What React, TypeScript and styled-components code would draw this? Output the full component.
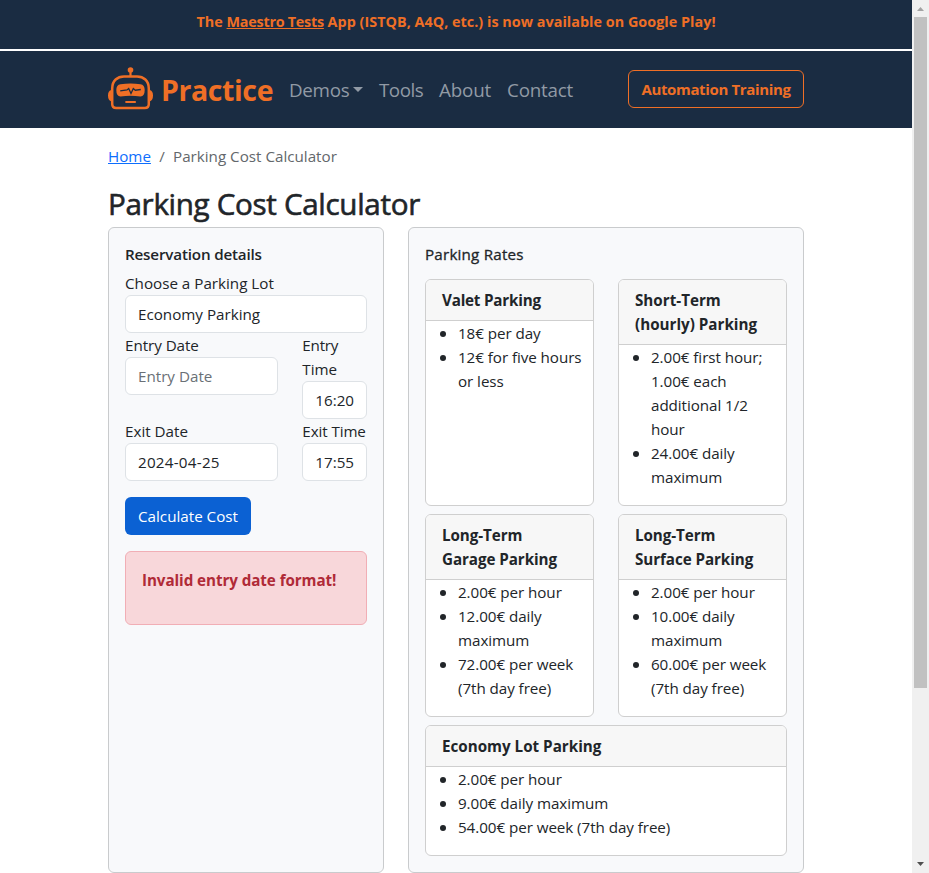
import React from "react";
import styled, { createGlobalStyle } from "styled-components";

const Global = createGlobalStyle`
  *, *::before, *::after { box-sizing: border-box; }
  html, body { margin: 0; height: 873px; overflow: hidden; background: #fff; }
  body, input, button {
    font-family: "Open Sans", "Noto Sans", sans-serif;
    font-size: 15.2px;
    line-height: 24px;
    color: #212529;
  }
`;

const NAVY = "#1a2c42";
const ORANGE = "#ef6f26";

/* Label whose tracking is tuned per use */
const Text = styled.span<{ $ls?: number }>`
  letter-spacing: ${(p) => p.$ls ?? 0}px;
  white-space: nowrap;
`;

const Window = styled.div`
  display: grid;
  grid-template-columns: 912px 17px;
  height: 873px;
`;
const Page = styled.div`
  display: flex;
  flex-direction: column;
  min-width: 0;
`;
const Container = styled.div`
  width: 696px;
  margin: 0 auto;
`;

const Banner = styled.div`
  height: 51px;
  padding-top: 10px;
  background: ${NAVY};
  border-bottom: 2px solid #fff;
  color: ${ORANGE};
  font-size: 14.36px;
  font-weight: 700;
  text-align: center;
`;
const BannerLink = styled.a`
  letter-spacing: -0.25px;
  text-decoration: underline;
`;

const Navbar = styled.nav`
  height: 77px;
  background: ${NAVY};
`;
const NavRow = styled(Container)`
  display: flex;
  align-items: center;
  height: 76px;
`;
const Brand = styled.div`
  display: flex;
  align-items: center;
  width: 181px;
  color: ${ORANGE};
  font-size: 28.5px;
  font-weight: 700;
  line-height: 40px;
  svg { flex: none; margin: -2px 8px 0 0; }
  span { padding-top: 2px; }
`;
const NavLink = styled.div<{ $w: number }>`
  display: flex;
  align-items: center;
  width: ${(p) => p.$w}px;
  padding-top: 1px;
  color: #919aa5;
  font-size: 18.8px;
  line-height: 30px;
`;
const Caret = styled.span`
  margin: -1px 0 0 4px;
  border: 5px solid transparent;
  border-top-color: currentColor;
  border-bottom: 0;
`;
const TrainingButton = styled.button`
  width: 176px;
  height: 38px;
  margin-left: auto;
  padding: 0;
  border: 1px solid ${ORANGE};
  border-radius: 6px;
  background: transparent;
  color: ${ORANGE};
  font-size: 15px;
  font-weight: 700;
`;

const Breadcrumb = styled.div`
  display: flex;
  margin-top: 16px;
  color: #63676b;
`;
const CrumbLink = styled.a`
  width: 43px;
  color: #0d6efd;
  text-decoration: underline;
`;
const CrumbSlash = styled.span`
  width: 22px;
  text-align: center;
`;
const Heading = styled.h1`
  margin: 16px 0 5px;
  padding-top: 1px;
  font-size: 29.6px;
  font-weight: 400;
  line-height: 37px;
  -webkit-text-stroke: 0.6px currentColor;
`;

const Columns = styled.div`
  display: grid;
  grid-template-columns: 276px 396px;
  gap: 24px;
  height: 646px;
`;
const Panel = styled.section`
  padding: 16px;
  border: 1px solid #c9cbcd;
  border-radius: 6px;
  background: #f8f9fb;
`;
const PanelTitle = styled.h2<{ $gap: number; $medium?: boolean }>`
  margin: 1px 0 ${(p) => p.$gap - 1}px;
  font-size: 15.2px;
  font-weight: ${(p) => (p.$medium ? 400 : 600)};
  line-height: 19px;
  -webkit-text-stroke: ${(p) => (p.$medium ? 0.3 : 0)}px currentColor;
`;

const Field = styled.label`
  display: block;
`;
const FieldRow = styled.div`
  display: grid;
  grid-template-columns: 153.3px 1fr;
  column-gap: 24px;
`;
const Input = styled.input`
  display: block;
  width: 100%;
  height: 38px;
  padding: 6px 12px;
  border: 1px solid #dee2e6;
  border-radius: 6px;
  outline: none;
  background: #fff;
  &::placeholder { color: #6a7076; opacity: 1; }
`;
const DateInput = styled(Input)`
  letter-spacing: 0.25px;
`;
const Submit = styled.button`
  display: block;
  width: 126px;
  height: 38px;
  margin: 16px 0;
  padding: 0;
  border: 0;
  border-radius: 6px;
  background: #0b61d3;
  color: #fff;
`;
const Alert = styled.div`
  height: 74px;
  padding: 16px;
  border: 1px solid #f1aeb5;
  border-radius: 6px;
  background: #f8d7da;
  color: #b02a37;
  font-weight: 700;
`;

const Rates = styled.div`
  display: grid;
  grid-template-columns: 169px 169px;
  gap: 8px 24px;
`;
const RateCard = styled.article<{ $wide?: boolean }>`
  grid-column: ${(p) => (p.$wide ? "1 / -1" : "auto")};
  overflow: hidden;
  border: 1px solid #cfcfcf;
  border-radius: 6px;
  background: #fff;
`;
const RateHeader = styled.header`
  display: flex;
  flex-direction: column;
  padding: 8px 16px;
  border-bottom: 1px solid #cfcfcf;
  background: #f7f7f7;
  font-weight: 700;
`;
const RateList = styled.ul`
  margin: 0 0 16px;
  padding: 0;
  list-style: none;
`;
const RateItem = styled.li`
  display: grid;
  grid-template-columns: 18px 1fr;
  padding-left: 14px;
  &::before {
    content: "";
    width: 6px;
    height: 6px;
    margin-top: 10px;
    border-radius: 50%;
    background: currentColor;
  }
`;
const Line = styled(Text)`
  display: block;
`;

const ScrollTrack = styled.aside`
  display: flex;
  flex-direction: column;
  align-items: center;
  background: #f0f0f0;
`;
const ScrollArrow = styled.div`
  height: 17px;
  svg { display: block; }
`;
const ScrollThumb = styled.div`
  width: 13px;
  height: 671px;
  margin-bottom: auto;
  background: #c1c1c1;
`;

const rates: { title: string[]; items: string[][]; ls?: number; wide?: boolean }[] = [
  { title: ["Valet Parking"], items: [["18€ per day"], ["12€ for five hours", "or less"]], ls: -0.2 },
  {
    title: ["Short-Term", "(hourly) Parking"],
    items: [
      ["2.00€ first hour;", "1.00€ each", "additional 1/2", "hour"],
      ["24.00€ daily", "maximum"],
    ],
  },
  {
    title: ["Long-Term", "Garage Parking"],
    items: [["2.00€ per hour"], ["12.00€ daily", "maximum"], ["72.00€ per week", "(7th day free)"]],
    ls: -0.07,
  },
  {
    title: ["Long-Term", "Surface Parking"],
    items: [["2.00€ per hour"], ["10.00€ daily", "maximum"], ["60.00€ per week", "(7th day free)"]],
    ls: -0.07,
  },
  {
    title: ["Economy Lot Parking"],
    items: [["2.00€ per hour"], ["9.00€ daily maximum"], ["54.00€ per week (7th day free)"]],
    wide: true,
  },
];

const Robot = () => (
  <svg width="45" height="43" viewBox="0 0 45 43" fill="none" stroke={ORANGE}>
    <circle cx="22.5" cy="3" r="2.8" fill={ORANGE} stroke="none" />
    <path d="M22.5 4v5" strokeWidth="2.200" />
    <path d="M4.200 37V21.500C4.200 13.500 9.500 9.500 16 9.500h13c6.500 0 11.800 4 11.800 12V37q0 4-4 4H8.200q-4 0-4-4Z" strokeWidth="2.500" />
    <path d="M3.500 23Q0 23.500 0 28.500t3.500 6ZM41.500 23q3.500.5 3.500 5.500t-3.500 6Z" fill={ORANGE} stroke="none" />
    <path d="M12.500 17.200q10-1.600 20 0 4.200.6 4.200 5.800 0 6.200-4.200 6.400-10-1.300-20 0-4.200-.2-4.200-6.400 0-5.200 4.200-5.800Z" fill={ORANGE} stroke="none" />
    <path d="M12.200 23.800l6.800-.9 1.700-1.400 2.300 5 2.300-5 2 1.700 5.500-.7" stroke={NAVY} strokeWidth="1.300" />
    <path d="M18.200 35h8.800" strokeWidth="2.200" strokeLinecap="round" />
  </svg>
);

export default function App() {
  return (
    <>
      <Global />
      <Window>
        <Page>
          <Banner>
            <Text $ls={0.03}>The <BannerLink>Maestro Tests</BannerLink> App (ISTQB, A4Q, etc.) is now available on Google Play!</Text>
          </Banner>
          <Navbar>
            <NavRow>
              <Brand><Robot /><Text $ls={-0.4}>Practice</Text></Brand>
              <NavLink $w={90}><Text $ls={-0.3}>Demos</Text><Caret /></NavLink>
              <NavLink $w={60}><Text $ls={-0.5}>Tools</Text></NavLink>
              <NavLink $w={68}><Text $ls={-0.15}>About</Text></NavLink>
              <NavLink $w={70}><Text $ls={-0.2}>Contact</Text></NavLink>
              <TrainingButton><Text $ls={-0.35}>Automation Training</Text></TrainingButton>
            </NavRow>
          </Navbar>
          <Container>
            <Breadcrumb>
              <CrumbLink><Text>Home</Text></CrumbLink>
              <CrumbSlash>/</CrumbSlash>
              <Text>Parking Cost Calculator</Text>
            </Breadcrumb>
            <Heading><Text $ls={-0.32}>Parking Cost Calculator</Text></Heading>
            <Columns>
              <Panel>
                <PanelTitle $gap={8}><Text $ls={-0.17}>Reservation details</Text></PanelTitle>
                <Field><Text>Choose a Parking Lot</Text><Input readOnly value="Economy Parking" /></Field>
                <FieldRow>
                  <Field><Text $ls={-0.05}>Entry Date</Text><Input placeholder="Entry Date" /></Field>
                  <Field><Line $ls={-0.2}>Entry</Line><Line>Time</Line><Input readOnly value="16:20" /></Field>
                </FieldRow>
                <FieldRow>
                  <Field><Text>Exit Date</Text><DateInput readOnly value="2024-04-25" /></Field>
                  <Field><Text $ls={-0.1}>Exit Time</Text><Input readOnly value="17:55" /></Field>
                </FieldRow>
                <Submit><Text>Calculate Cost</Text></Submit>
                <Alert><Text $ls={-0.07}>Invalid entry date format!</Text></Alert>
              </Panel>
              <Panel>
                <PanelTitle $gap={16} $medium><Text $ls={0.2}>Parking Rates</Text></PanelTitle>
                <Rates>
                  {rates.map((r, i) => (
                    <RateCard key={i} $wide={r.wide}>
                      <RateHeader>{r.title.map((t) => <Line key={t} $ls={r.ls}>{t}</Line>)}</RateHeader>
                      <RateList>
                        {r.items.map((item, j) => (
                          <RateItem key={j}>
                            <div>{item.map((t) => <Line key={t} $ls={-0.06}>{t}</Line>)}</div>
                          </RateItem>
                        ))}
                      </RateList>
                    </RateCard>
                  ))}
                </Rates>
              </Panel>
            </Columns>
          </Container>
        </Page>
        <ScrollTrack>
          <ScrollArrow><svg width="17" height="17"><path d="M5 11l3.500-4 3.500 4Z" fill="#a3a3a3" /></svg></ScrollArrow>
          <ScrollThumb />
          <ScrollArrow><svg width="17" height="17"><path d="M5 6l3.500 4L12 6Z" fill="#505050" /></svg></ScrollArrow>
        </ScrollTrack>
      </Window>
    </>
  );
}
